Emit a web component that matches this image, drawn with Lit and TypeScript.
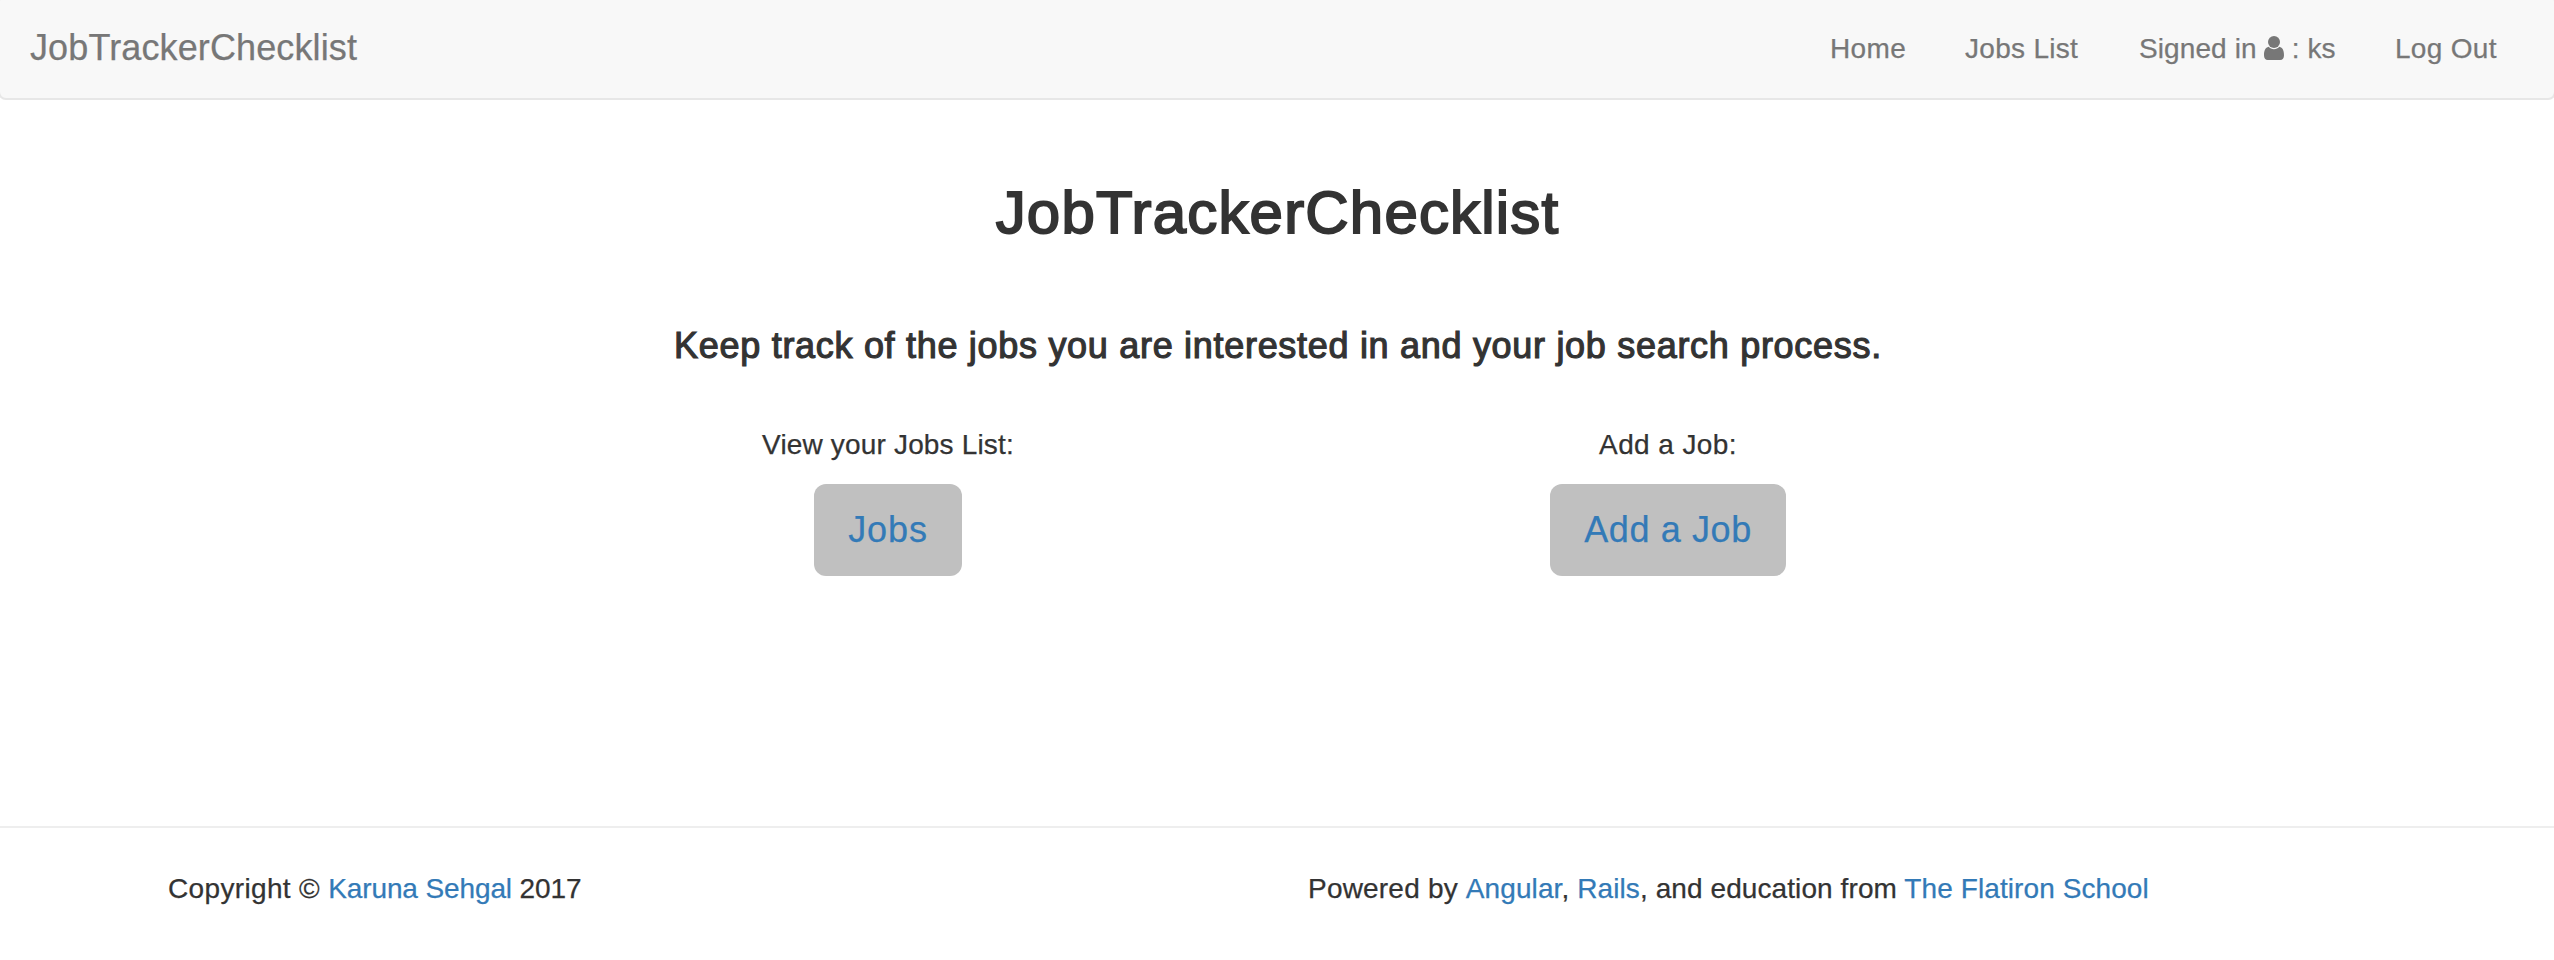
import { LitElement, html, css } from "lit";
import { customElement } from "lit/decorators.js";

@customElement("app-root")
class AppRoot extends LitElement {
  static styles = css`
    :host {
      display: block;
      height: 960px;
      overflow: hidden;
      background: #fff;
      color: #333;
      font: 28px/40px "Liberation Sans", Arial, sans-serif;
      -webkit-text-stroke: 0.25px currentColor;
    }
    a { color: #337ab7; text-decoration: none; }
    nav {
      box-sizing: border-box;
      height: 106px;
      margin: -6px -2px 0;
      padding: 4px 58px 0 30px;
      border: 2px solid #e7e7e7;
      border-radius: 8px;
      background: #f8f8f8;
      display: flex;
      justify-content: space-between;
    }
    nav a { color: #777; white-space: nowrap; }
    .brand { font-size: 36px; line-height: 95px; letter-spacing: 0.12px; }
    .links { display: flex; gap: 60px; line-height: 98px; }
    .home { width: 75px; letter-spacing: 0.4px; }
    .list { width: 114px; letter-spacing: 0.3px; }
    .user { width: 196px; display: flex; letter-spacing: 0.1px; }
    .user svg { width: 20px; height: 24px; margin: 36px 8px 0 7px; flex: none; }
    .out { width: 101px; letter-spacing: 0.3px; }
    main { text-align: center; }
    h1, h2, p { margin: 0; font-weight: 400; }
    h1 {
      padding: 77px 0 0 1px;
      font-size: 60px;
      line-height: 72px;
      letter-spacing: 1.18px;
      -webkit-text-stroke: 1.9px #333;
    }
    h2 {
      padding: 77px 0 0 2px;
      font-size: 36px;
      line-height: 40px;
      letter-spacing: 0.7px;
      -webkit-text-stroke: 1.15px #333;
    }
    .columns {
      display: grid;
      grid-template-columns: 780px 780px;
      padding: 59px 0 0 498px;
      height: 401px;
      box-sizing: content-box;
      align-content: start;
    }
    .view { letter-spacing: 0.17px; }
    .add { letter-spacing: 0.4px; }
    .button {
      display: inline-block;
      box-sizing: border-box;
      height: 92px;
      margin-top: 19px;
      border-radius: 12px;
      background: #c0c0c0;
      font-size: 36px;
      line-height: 92px;
    }
    .jobs { width: 148px; letter-spacing: 0.9px; }
    .new { width: 236px; letter-spacing: 0.6px; }
    footer {
      border-top: 2px solid #eee;
      padding: 41px 137px 0;
      display: grid;
      grid-template-columns: 1140px 1140px;
    }
    footer p { padding-left: 31px; }
    .copy { letter-spacing: 0.35px; }
    .copy a, .copy .year { letter-spacing: -0.12px; }
    .powered { letter-spacing: 0.09px; }
    .powered .lead { letter-spacing: 0.2px; }
  `;

  render() {
    return html`
      <nav>
        <a class="brand">JobTrackerChecklist</a>
        <div class="links">
          <a class="home">Home</a>
          <a class="list">Jobs List</a>
          <a class="user"><span>Signed in</span><svg viewBox="0 0 20 24" fill="#777"><ellipse cx="10" cy="6" rx="6" ry="6"/><path d="M4.6 10.8C6 12.4 7.8 13.3 10 13.3s4-.9 5.4-2.5c3.3.7 4.6 4 4.6 8.4 0 2.9-1.4 4.800-3.800 4.800H3.800C1.400 24 0 22.100 0 19.200c0-4.400 1.300-7.700 4.600-8.400Z"/></svg><span>: ks</span></a>
          <a class="out">Log Out</a>
        </div>
      </nav>
      <main>
        <h1>JobTrackerChecklist</h1>
        <h2>Keep track of the jobs you are interested in and your job search process.</h2>
        <div class="columns">
          <div><p class="view">View your Jobs List:</p><a class="button jobs">Jobs</a></div>
          <div><p class="add">Add a Job:</p><a class="button new">Add a Job</a></div>
        </div>
      </main>
      <footer>
        <p class="copy">Copyright © <a>Karuna Sehgal</a><span class="year"> 2017</span></p>
        <p class="powered"><span class="lead">Powered by </span><a>Angular</a>, <a>Rails</a>, and education from <a>The Flatiron School</a></p>
      </footer>
    `;
  }
}
